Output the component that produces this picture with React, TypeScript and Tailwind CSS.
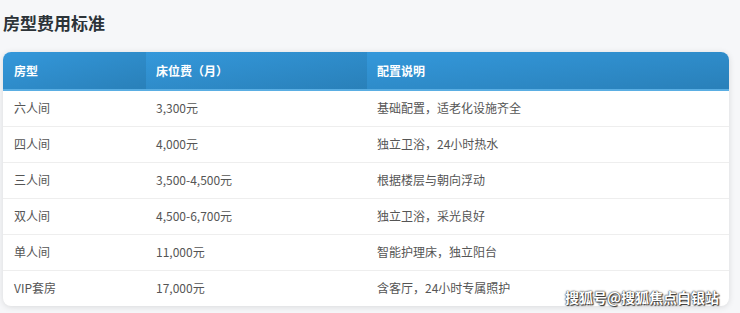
const rows = [
  { type: '六人间', price: '3,300元', desc: '基础配置，适老化设施齐全' },
  { type: '四人间', price: '4,000元', desc: '独立卫浴，24小时热水' },
  { type: '三人间', price: '3,500-4,500元', desc: '根据楼层与朝向浮动' },
  { type: '双人间', price: '4,500-6,700元', desc: '独立卫浴，采光良好' },
  { type: '单人间', price: '11,000元', desc: '智能护理床，独立阳台' },
  { type: 'VIP套房', price: '17,000元', desc: '含客厅，24小时专属照护' },
]

const font = { fontFamily: '"Noto Sans CJK SC", "Noto Sans", sans-serif' }

export default function App() {
  return (
    <div className="w-[740px] h-[313px] bg-[#f6f7f9] relative overflow-hidden" style={font}>
      <div className="pl-[3px] pr-[11px] pt-[11px]">
        <h2 className="text-[17px] leading-[24px] font-bold text-[#2c3338] mb-[17px]">房型费用标准</h2>

        <div className="rounded-[8px] overflow-hidden bg-white shadow-[0_1px_6px_rgba(0,0,0,0.12)]">
          <table className="w-full border-collapse text-[12px]">
            <thead>
              <tr className="border-b-2 border-[#5aaee3]">
                <th className="w-[143px] h-[38px] px-[11px] text-left font-bold text-white bg-gradient-to-br from-[#3498db] to-[#2980b9]">房型</th>
                <th className="w-[221px] px-[10px] text-left font-bold text-white bg-gradient-to-br from-[#3498db] to-[#2980b9]">床位费（月）</th>
                <th className="px-[10px] text-left font-bold text-white bg-gradient-to-br from-[#3498db] to-[#2980b9]">配置说明</th>
              </tr>
            </thead>
            <tbody>
              {rows.map((r, i) => (
                <tr key={i} className={i < rows.length - 1 ? 'border-b border-[#eeeeee]' : ''}>
                  <td className="h-[36px] px-[11px] text-[#555]">{r.type}</td>
                  <td className="px-[10px] text-[#555]">{r.price}</td>
                  <td className="px-[10px] text-[#555]">{r.desc}</td>
                </tr>
              ))}
            </tbody>
          </table>
        </div>
      </div>

      <div
        className="absolute left-[565px] top-[287px] text-[14px] leading-[20px] font-bold text-white"
        style={{ textShadow: '0 0 1px #333, 0 0 2px #333, 1px 1px 1px #333' }}
      >
        搜狐号@搜狐焦点白银站
      </div>
    </div>
  )
}
